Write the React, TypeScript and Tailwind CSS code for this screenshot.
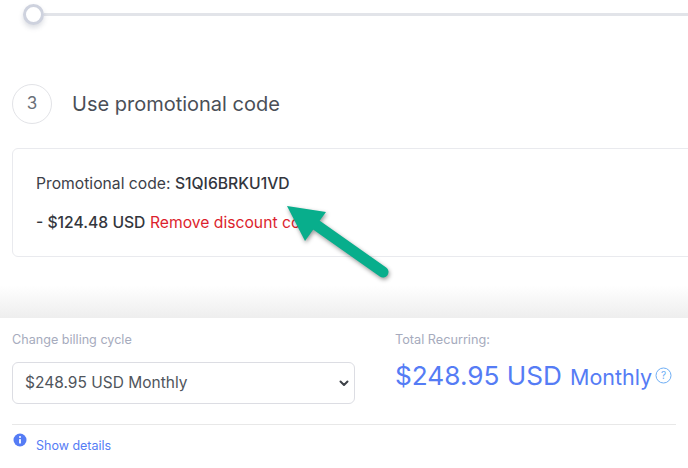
export default function App() {
  return (
    <div className="relative flex h-[468px] w-[688px] flex-col overflow-hidden bg-white font-['Inter',sans-serif] text-[#4a4f57]">
      {/* slider */}
      <div className="flex h-[28px] items-center pl-[23px]">
        <div className="z-10 h-[21px] w-[21px] shrink-0 rounded-full border-[3px] border-[#ced2de] bg-white shadow-[0_3px_5px_rgba(60,70,100,0.18)]" />
        <div className="h-[3px] flex-1 bg-[#e2e4e9]" />
      </div>

      {/* step heading */}
      <div className="mt-[56px] flex items-center pl-[12px]">
        <div className="flex h-[40px] w-[40px] items-center justify-center rounded-full border border-[#e2e3e7] text-[17px] text-[#6b7078]">3</div>
        <h2 className="ml-[20px] text-[20px] leading-[40px] text-[#4a4f57]">Use promotional code</h2>
      </div>

      {/* promo card */}
      <div className="ml-[12px] mt-[24px] h-[109px] w-[700px] shrink-0 rounded-[6px] border border-[#e9eaee] pl-[23px] pt-[25px] text-[15.7px] text-[#3c4048]">
        <p className="leading-[20px] whitespace-nowrap">
          Promotional code: <span className="font-medium text-[#33363d]">S1QI6BRKU1VD</span>
        </p>
        <p className="mt-[19px] leading-[20px] whitespace-nowrap">
          <span className="font-medium text-[#33363d]">- $124.48 USD</span>{' '}
          <span className="text-[#dc1f2e]">Remove discount code</span>
        </p>
      </div>

      {/* fade above the summary */}
      <div className="mt-[28px] h-[33px] shrink-0 bg-gradient-to-b from-white to-[#eeeeee]" />

      {/* summary */}
      <div className="flex-1 bg-white px-[12px]">
        <div className="flex h-[106px]">
          <div className="w-[343px] shrink-0">
            <p className="mt-[14px] text-[12.6px] leading-[16px] text-[#a6abbd]">Change billing cycle</p>
            <div className="mt-[14px] flex h-[42px] items-center justify-between rounded-[6px] border border-[#dcdde3] pl-[12px] pr-[4px] text-[15.5px] text-[#50555c]">
              <span>$248.95 USD Monthly</span>
              <svg width="12" height="12" viewBox="0 0 12 12" fill="none" stroke="#3d4148" strokeWidth="2" strokeLinecap="round" strokeLinejoin="round">
                <path d="M2.5 4.5 6 8l3.5-3.5" />
              </svg>
            </div>
          </div>
          <div className="ml-[40px] shrink-0">
            <p className="mt-[14px] text-[12.7px] leading-[16px] text-[#a6abbd]">Total Recurring:</p>
            <div className="mt-[8px] flex items-center whitespace-nowrap text-[#557cf5]">
              <span className="text-[26.2px] leading-[36px]">$248.95 USD</span>
              <span className="ml-[8px] mt-[3px] text-[21.5px] leading-[36px]">Monthly</span>
              <svg className="ml-[3px]" width="17" height="17" viewBox="0 0 17 17" fill="none">
                <circle cx="8.5" cy="8.5" r="7.5" stroke="#6eaef5" />
                <text x="8.5" y="12" textAnchor="middle" fontSize="10" fill="#6eaef5">?</text>
              </svg>
            </div>
          </div>
        </div>
        <div className="flex border-t border-[#e8e8e8] pt-[8px]">
          <svg width="15" height="15" viewBox="0 0 15 15" className="ml-[1px]">
            <circle cx="7" cy="7" r="6.5" fill="#557cf5" />
            <circle cx="7" cy="4" r="1" fill="#fff" />
            <rect x="6.1" y="6" width="1.8" height="4.6" rx="0.6" fill="#fff" />
          </svg>
          <a className="ml-[8px] mt-[4px] text-[12.5px] leading-[18px] text-[#557cf5]">Show details</a>
        </div>
      </div>

      {/* annotation arrow */}
      <svg className="absolute left-0 top-0" width="688" height="468" viewBox="0 0 688 468" fill="none">
        <g className="drop-shadow-[1px_2px_2px_rgba(0,0,0,0.4)]">
          <path d="M312 222 383 272" stroke="#08ae8c" strokeWidth="11" strokeLinecap="round" />
          <path d="M287 206 326 212 305 241Z" fill="#08ae8c" />
        </g>
      </svg>
    </div>
  );
}
